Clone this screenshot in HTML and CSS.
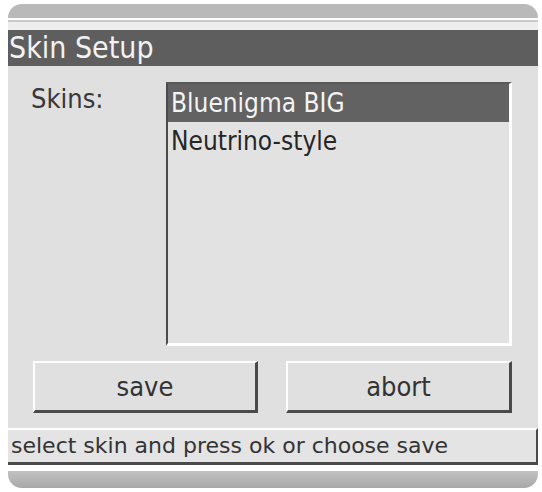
FILE: index.html
```html
<!DOCTYPE html>
<html>
<head>
<meta charset="utf-8">
<link rel="stylesheet" href="styles.css">
</head>
<body>
<div class="frame">
  <div class="topband"></div>
  <div class="topsep"></div>
  <div class="title">Skin Setup</div>
  <div class="content">
    <div class="row">
      <div class="label">Skins:</div>
      <div class="listbox">
        <div class="item selected">Bluenigma BIG</div>
        <div class="item">Neutrino-style</div>
      </div>
    </div>
    <div class="buttons">
      <div class="btn btn-save">save</div>
      <div class="btn btn-abort">abort</div>
    </div>
  </div>
  <div class="status">select skin and press ok or choose save</div>
  <div class="bottomband"></div>
</div>
</body>
</html>
```
FILE: styles.css
```css
html, body {
  margin: 0;
  padding: 0;
  background: #ffffff;
}
body {
  width: 542px;
  height: 492px;
  overflow: hidden;
}
.frame {
  margin-left: 8px;
  width: 530px;
  font-family: "DejaVu Sans Condensed", "DejaVu Sans", sans-serif;
  font-stretch: semi-condensed;
}
.topband {
  margin-top: 4px;
  height: 14px;
  background: #b9b9b9;
  border-radius: 16px 16px 0 0;
}
.topsep {
  height: 10px;
  border-top: 2px solid #ffffff;
  background: linear-gradient(#c9c9c9 0, #c9c9c9 2px, #eeeeee 2px);
}
.title {
  height: 36px;
  line-height: 36px;
  background: #5e5e5e;
  color: #f2f2f2;
  font-size: 30px;
  padding-left: 1px;
  white-space: nowrap;
}
.content {
  background: #e0e0e0;
  padding: 16px 0 15px 0;
}
.row {
  display: flex;
  align-items: flex-start;
}
.label {
  width: 135px;
  padding-left: 23px;
  padding-top: 1px;
  font-size: 27px;
  color: #383838;
}
.listbox {
  width: 341px;
  height: 259px;
  border-top: 2px solid #5a5a5a;
  border-left: 2px solid #4c4c4c;
  border-right: 3px solid #ffffff;
  border-bottom: 3px solid #ffffff;
  background: #e2e2e2;
}
.item {
  height: 38px;
  line-height: 38px;
  font-size: 26px;
  padding-left: 3px;
  color: #262626;
  white-space: nowrap;
}
.item.selected {
  background: #626262;
  color: #f4f4f4;
}
.buttons {
  display: flex;
  gap: 28px;
  margin-top: 15px;
  padding-left: 25px;
}
.btn {
  height: 47px;
  border-top: 2px solid #ffffff;
  border-left: 2px solid #ffffff;
  border-bottom: 3px solid #4a4a4a;
  border-right: 3px solid #4a4a4a;
  display: flex;
  align-items: center;
  justify-content: center;
  font-size: 27px;
  color: #333333;
  background: #e0e0e0;
}
.btn-save {
  width: 220px;
}
.btn-abort {
  width: 221px;
}
.status {
  height: 32px;
  line-height: 32px;
  border-top: 2px solid #ffffff;
  border-bottom: 3px solid #4a4a4a;
  border-right: 2px solid #4a4a4a;
  background: #e4e4e4;
  padding-left: 3px;
  font-family: "DejaVu Sans", sans-serif;
  font-stretch: normal;
  font-size: 22px;
  color: #333333;
  white-space: nowrap;
}
.bottomband {
  margin-top: 6px;
  height: 17px;
  border-radius: 0 0 14px 14px;
  background: linear-gradient(#c2c2c2, #a8a8a8);
}
```
